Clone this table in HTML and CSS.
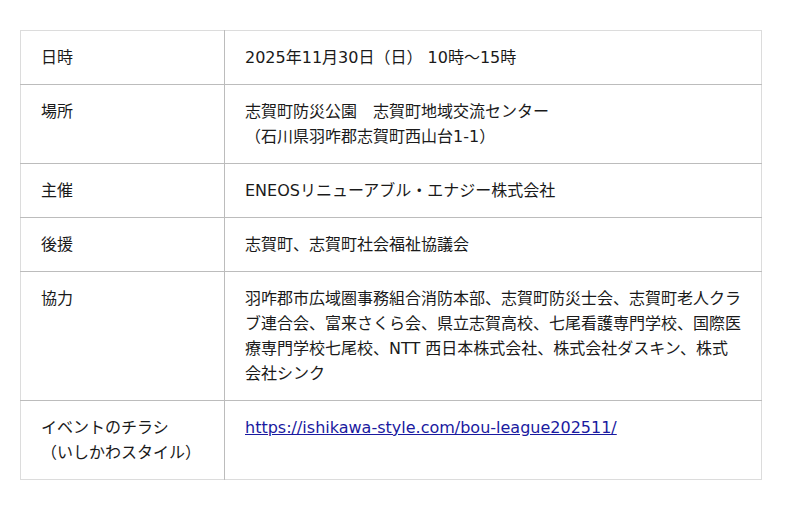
FILE: index.html
```html
<!DOCTYPE html>
<html lang="ja">
<head>
<meta charset="utf-8">
<link rel="stylesheet" href="styles.css">
</head>
<body>
<table class="info">
  <tr><th>日時</th><td>2025年11月30日（日） 10時〜15時</td></tr>
  <tr><th>場所</th><td>志賀町防災公園　志賀町地域交流センター<br>（石川県羽咋郡志賀町西山台1-1）</td></tr>
  <tr><th>主催</th><td>ENEOSリニューアブル・エナジー株式会社</td></tr>
  <tr><th>後援</th><td>志賀町、志賀町社会福祉協議会</td></tr>
  <tr><th>協力</th><td>羽咋郡市広域圏事務組合消防本部、志賀町防災士会、志賀町老人クラブ連合会、富来さくら会、県立志賀高校、七尾看護専門学校、国際医療専門学校七尾校、NTT 西日本株式会社、株式会社ダスキン、株式会社シンク</td></tr>
  <tr><th>イベントのチラシ<br>（いしかわスタイル）</th><td><a href="#">https://ishikawa-style.com/bou-league202511/</a></td></tr>
</table>
</body>
</html>
```
FILE: styles.css
```css
html, body { margin: 0; padding: 0; background: #fff; }
body { padding: 30px 20px; }
.info {
  border-collapse: collapse;
  width: 742px;
  font-family: "DejaVu Sans", "Noto Sans CJK JP", sans-serif;
  font-size: 16px;
  line-height: 25px;
  color: #1a1a1a;
  border: 1px solid #dcdcdc;
}
.info th, .info td {
  text-align: left;
  vertical-align: top;
  font-weight: normal;
  padding: 14px 20px;
  border-top: 1px solid #bcbcbc;
}
.info tr:first-child th, .info tr:first-child td { border-top: 1px solid #dcdcdc; }
.info th { width: 163px; border-right: 1px solid #bcbcbc; }
.info a { color: #1a1aa0; }
```
